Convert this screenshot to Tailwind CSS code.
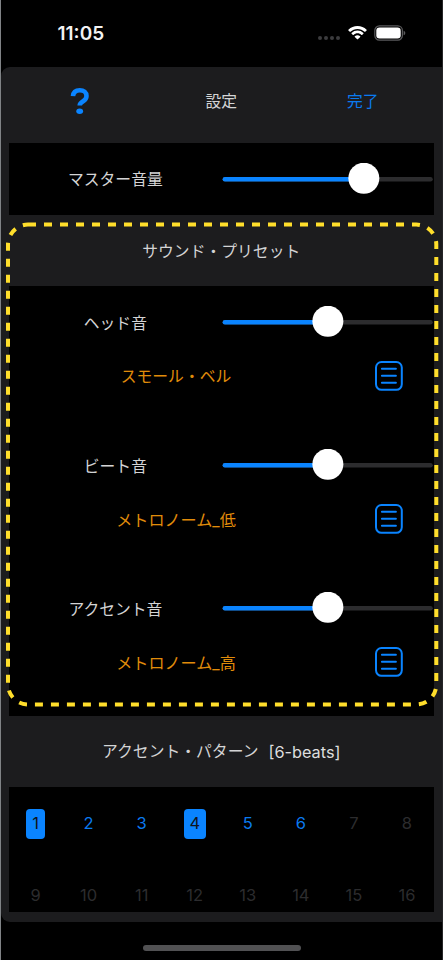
<!DOCTYPE html>
<html lang="ja">
<head>
<meta charset="utf-8">
<title>設定</title>
<script src="https://cdn.jsdelivr.net/npm/@tailwindcss/browser@4"></script>
</head>
<body class="bg-black">
<div class="relative flex h-[960px] w-[443px] flex-col overflow-hidden border-r border-l border-r-[#252527] border-l-[#808386] bg-black font-['Inter','Noto_Sans_CJK_JP',sans-serif] text-[15.800px] leading-none text-[#d4d4d5]">
  <header class="flex h-[67px] shrink-0 items-center pl-[56.500px]">
    <span class="w-[260.500px] text-[19px] font-semibold text-[#f2f2f2]">11:05</span>
    <svg class="mt-[9px] h-[4px] w-[22px]" viewBox="0 0 22 4" fill="#3c3c3e"><circle cx="2" cy="2" r="2"/><circle cx="8" cy="2" r="2"/><circle cx="14" cy="2" r="2"/><circle cx="20" cy="2" r="2"/></svg>
    <svg class="ml-[7.500px] -mt-[1px] h-[14px] w-[19px]" viewBox="0 0 19 14" fill="#fff"><path d="M9.500 2.900c2.700 0 5.200 1 7.100 2.900.2.2.4.2.6 0l1.400-1.400c.2-.2.2-.4 0-.6a13.100 13.100 0 0 0-18.200 0c-.2.2-.2.4 0 .6l1.400 1.400c.2.2.4.2.6 0 1.900-1.900 4.400-2.900 7.100-2.900z"/><path d="M9.500 7.300c1.500 0 2.900.6 4 1.600.2.2.4.2.6 0l1.400-1.400c.2-.2.2-.4 0-.6a8.700 8.700 0 0 0-12 0c-.2.2-.2.4 0 .6l1.400 1.400c.2.2.4.2.6 0 1.100-1 2.500-1.600 4-1.600z"/><path d="M12.200 10.300c.2.2.2.4 0 .6l-2.400 2.400c-.2.2-.4.2-.6 0l-2.400-2.400c-.2-.2-.2-.4 0-.6a4.200 4.200 0 0 1 5.400 0z"/></svg>
    <svg class="ml-[7.500px] -mt-[1px] h-[16px] w-[32px]" viewBox="0 0 32 16"><rect x=".8" y=".9" width="27.600" height="14.200" rx="4.600" fill="#000" stroke="#5a5a5c" stroke-width="1.200"/><rect x="2.300" y="2.500" width="24.400" height="11" rx="3.200" fill="#fff"/><path d="M29.600 5.700c1 .4 1.700 1.200 1.700 2.300s-.7 1.900-1.700 2.300z" fill="#5a5a5c"/></svg>
  </header>

  <main class="flex h-[855px] shrink-0 flex-col rounded-l-[9px] bg-[#1c1c1e] pr-[8.500px] pl-[8px]">
    <nav class="grid h-[76px] shrink-0 grid-cols-3 items-center justify-items-center">
      <button aria-label="ヘルプ" class="-mt-[9px]"><svg class="h-[28px] w-[20px]" viewBox="0 0 20 28"><path d="M3 9.200C3.300 5.200 5.800 3.200 9.800 3.200s6.700 2.100 6.700 5.700c0 2.600-1.300 4-3.400 5.300-2.400 1.500-3.400 2.300-3.400 4.300" fill="none" stroke="#0a84ff" stroke-width="4.600"/><ellipse cx="9.700" cy="24.200" rx="3.400" ry="2.700" fill="#0a84ff"/></svg></button>
      <h1 class="-mt-[7px]">設定</h1>
      <button class="-mt-[7px] text-[#0a7af0]">完了</button>
    </nav>

    <section class="flex h-[72px] shrink-0 items-center bg-black">
      <span class="w-[213px] pt-[2px] text-center">マスター音量</span>
      <svg class="h-[32px] w-[212px]" viewBox="0 0 212 32"><rect x=".6" y="14" width="210.400" height="4.600" rx="2.300" fill="#2c2c2e"/><rect x=".6" y="14" width="142" height="4.600" rx="2.300" fill="#0a84ff"/><circle cx="142" cy="15.200" r="15.500" fill="#fff"/></svg>
    </section>

    <h2 class="flex h-[71px] shrink-0 items-center justify-center pt-[2px]">サウンド・プリセット</h2>

    <section class="h-[429.500px] shrink-0 bg-black">
      <div class="h-[143px]">
        <div class="flex h-[71.500px] items-center">
          <span class="w-[213px] pt-[4px] text-center">ヘッド音</span>
          <svg class="h-[32px] w-[212px]" viewBox="0 0 212 32"><rect x=".6" y="14" width="210.400" height="4.600" rx="2.300" fill="#2c2c2e"/><rect x=".6" y="14" width="106" height="4.600" rx="2.300" fill="#0a84ff"/><circle cx="106" cy="15.200" r="15.500" fill="#fff"/></svg>
        </div>
        <div class="flex h-[36px] items-center">
          <span class="w-[334px] pt-[3px] text-center text-[#e08c0a]">スモール・ベル</span>
          <svg class="ml-[32px] h-[30px] w-[28px]" viewBox="0.300 0.500 28 30" fill="none" stroke="#0a84ff" stroke-width="2" stroke-linecap="round"><rect x="1.300" y="1.500" width="25.800" height="27.800" rx="5.500"/><path d="M7.200 8.200h14M7.200 15.200h14M7.200 22.200h14"/></svg>
        </div>
      </div>
      <div class="h-[143px]">
        <div class="flex h-[71.500px] items-center">
          <span class="w-[213px] pt-[4px] text-center">ビート音</span>
          <svg class="h-[32px] w-[212px]" viewBox="0 0 212 32"><rect x=".6" y="14" width="210.400" height="4.600" rx="2.300" fill="#2c2c2e"/><rect x=".6" y="14" width="106" height="4.600" rx="2.300" fill="#0a84ff"/><circle cx="106" cy="15.200" r="15.500" fill="#fff"/></svg>
        </div>
        <div class="flex h-[36px] items-center">
          <span class="w-[334px] pt-[3px] text-center text-[16.100px] text-[#e08c0a]">メトロノーム_低</span>
          <svg class="ml-[32px] h-[30px] w-[28px]" viewBox="0.300 0.500 28 30" fill="none" stroke="#0a84ff" stroke-width="2" stroke-linecap="round"><rect x="1.300" y="1.500" width="25.800" height="27.800" rx="5.500"/><path d="M7.200 8.200h14M7.200 15.200h14M7.200 22.200h14"/></svg>
        </div>
      </div>
      <div class="h-[143px]">
        <div class="flex h-[71.500px] items-center">
          <span class="w-[213px] pt-[4px] text-center">アクセント音</span>
          <svg class="h-[32px] w-[212px]" viewBox="0 0 212 32"><rect x=".6" y="14" width="210.400" height="4.600" rx="2.300" fill="#2c2c2e"/><rect x=".6" y="14" width="106" height="4.600" rx="2.300" fill="#0a84ff"/><circle cx="106" cy="15.200" r="15.500" fill="#fff"/></svg>
        </div>
        <div class="flex h-[36px] items-center">
          <span class="w-[334px] pt-[3px] text-center text-[16.100px] text-[#e08c0a]">メトロノーム_高</span>
          <svg class="ml-[32px] h-[30px] w-[28px]" viewBox="0.300 0.500 28 30" fill="none" stroke="#0a84ff" stroke-width="2" stroke-linecap="round"><rect x="1.300" y="1.500" width="25.800" height="27.800" rx="5.500"/><path d="M7.200 8.200h14M7.200 15.200h14M7.200 22.200h14"/></svg>
        </div>
      </div>
    </section>

    <h2 class="flex h-[71.500px] shrink-0 items-center justify-center gap-[10px] pt-[2px]"><span>アクセント・パターン</span><span class="text-[16.300px] text-[#dededf]">[6-beats]</span></h2>

    <section class="grid h-[125px] shrink-0 grid-cols-8 grid-rows-[73px_70px] items-center justify-items-center overflow-hidden bg-black text-[16.500px] text-[#2c2c2e]">
      <span class="flex h-[30px] w-[19px] items-center justify-center rounded-[4px] bg-[#0a84ff] text-[#10141c]">1</span>
      <span class="text-[#0a7af0]">2</span>
      <span class="text-[#0a7af0]">3</span>
      <span class="flex h-[30px] w-[22px] items-center justify-center rounded-[4px] bg-[#0a84ff] text-[#10141c]">4</span>
      <span class="text-[#0a7af0]">5</span>
      <span class="text-[#0a7af0]">6</span>
      <span>7</span><span>8</span>
      <span>9</span><span>10</span><span>11</span><span>12</span><span>13</span><span>14</span><span>15</span><span>16</span>
    </section>
  </main>

  <footer class="flex flex-1 justify-center pt-[23px]"><div class="h-[6px] w-[158px] rounded-full bg-[#515153]"></div></footer>

  <svg class="pointer-events-none absolute top-0 -left-px h-[960px] w-[443px]" viewBox="0 0 443 960" fill="none"><rect x="8" y="224.600" width="428.300" height="479.900" rx="20" stroke="#ffde2b" stroke-width="4" stroke-dasharray="8 8"/></svg>
</div>
</body>
</html>
